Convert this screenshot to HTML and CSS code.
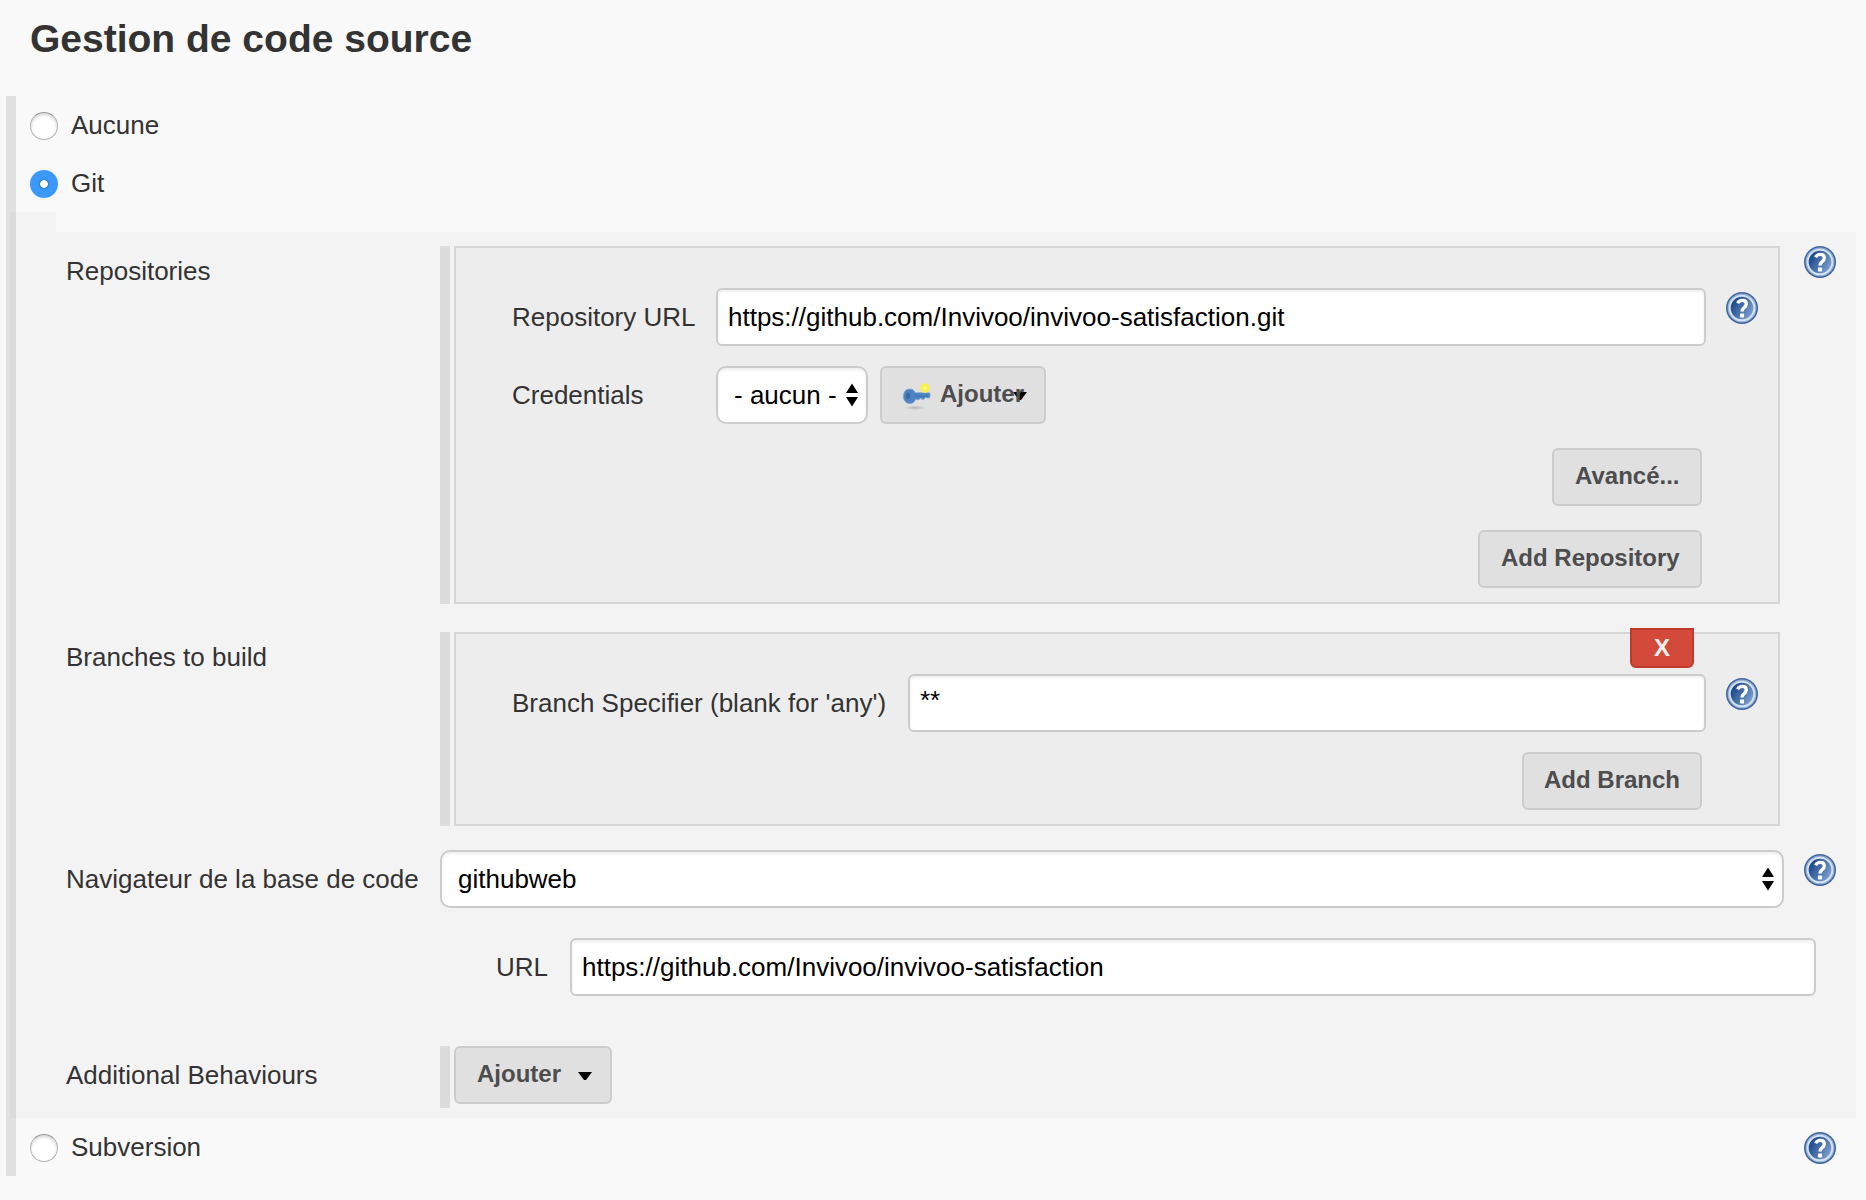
FILE: index.html
```html
<!DOCTYPE html>
<html lang="fr">
<head>
<meta charset="utf-8">
<title>Gestion de code source</title>
<link rel="stylesheet" href="styles.css">
</head>
<body>
<svg class="defs" width="0" height="0" aria-hidden="true">
  <defs>
    <linearGradient id="disc" x1="0" y1="0.2" x2="1" y2="0.8">
      <stop offset="0.15" stop-color="#204c8e"/>
      <stop offset="1" stop-color="#86a8d4"/>
    </linearGradient>
    <linearGradient id="rim" x1="0" y1="0" x2="0" y2="1">
      <stop offset="0" stop-color="#4169a4"/>
      <stop offset="1" stop-color="#3a619c"/>
    </linearGradient>
    <radialGradient id="spark">
      <stop offset="0" stop-color="#fffbb0"/>
      <stop offset="0.45" stop-color="#fbf04e"/>
      <stop offset="0.75" stop-color="#f6ec5c"/>
      <stop offset="1" stop-color="#f6ec5c" stop-opacity="0"/>
    </radialGradient>
    <radialGradient id="shade">
      <stop offset="0" stop-color="#999" stop-opacity="0.6"/>
      <stop offset="1" stop-color="#999" stop-opacity="0"/>
    </radialGradient>
    <symbol id="help" viewBox="0 0 32 32">
      <circle cx="16" cy="16" r="16" fill="url(#rim)"/>
      <circle cx="16" cy="16" r="13.700" fill="none" stroke="#8fabd2" stroke-width="1.600"/>
      <circle cx="16" cy="16" r="12.300" fill="url(#disc)" stroke="#d6e1f0" stroke-width="2"/>
      <path d="M11.600 11.200C12.800 9 14.300 8.300 16.200 8.300C18.900 8.300 20.300 9.700 20.300 11.800C20.300 13.700 19.400 14.700 18.100 15.700C16.800 16.700 16 17.300 16 19.600" fill="none" stroke="#fff" stroke-width="3.300"/>
      <rect x="14" y="21.500" width="4.100" height="3.900" rx="0.600" fill="#fff"/>
    </symbol>
    <symbol id="key" viewBox="0 0 32 32">
      <ellipse cx="14" cy="28.500" rx="12" ry="2.400" fill="url(#shade)"/>
      <path d="M8 8.500C11.500 8.500 13 10 14 12.500H28C29.800 12.500 30.100 13.500 29.900 15L29.500 18H26L25 17L23.500 19.500H21L20 18L18 20L14.500 19.500C13.500 22.500 11.500 24 8.500 24C4 24 1.500 20.500 1.500 16.300C1.500 11.800 4 8.500 8 8.500Z" fill="#4d83c3" stroke="#7ba2d0" stroke-width="0.800"/>
      <path d="M14 16.200H28" stroke="#3f75b5" stroke-width="1.200"/>
      <ellipse cx="6.500" cy="16" rx="2.300" ry="3.500" fill="#3c6ca8"/>
      <circle cx="24.500" cy="7.500" r="6" fill="url(#spark)"/>
    </symbol>
    <symbol id="updown" viewBox="0 0 12 24">
      <path d="M6 0.500L12 10H0ZM6 23.500L0 14H12Z"/>
    </symbol>
    <symbol id="caret" viewBox="0 0 14 8">
      <path d="M0 0H14L8 8H6Z"/>
    </symbol>
  </defs>
</svg>

<h1 class="title">Gestion de code source</h1>

<main class="scm">
  <div class="choice choice-first"><span class="radio"></span><span class="choice-name">Aucune</span></div>
  <div class="choice choice-git"><span class="radio radio-on"></span><span class="choice-name">Git</span></div>

  <section class="panel">
    <div class="panel-notch"></div>
    <div class="panel-body">
      <div class="row row-repos">
        <div class="label label-top">Repositories</div>
        <div class="group">
          <div class="box">
            <div class="line">
              <span class="box-label">Repository URL</span>
              <div class="input">https://github.com/Invivoo/invivoo-satisfaction.git</div>
              <svg class="help"><use href="#help"/></svg>
            </div>
            <div class="line line-next">
              <span class="box-label">Credentials</span>
              <div class="select select-small">- aucun -<svg class="updown"><use href="#updown"/></svg></div>
              <div class="button button-key">
                <svg class="key"><use href="#key"/></svg>
                <svg class="caret caret-under"><use href="#caret"/></svg>
                <span class="button-text">Ajouter</span>
              </div>
            </div>
            <div class="actions">
              <div class="button w-advanced"><span class="button-text">Avancé...</span></div>
              <div class="button w-repository"><span class="button-text">Add Repository</span></div>
            </div>
          </div>
        </div>
        <svg class="help help-flush"><use href="#help"/></svg>
      </div>

      <div class="row row-branches">
        <div class="label label-top">Branches to build</div>
        <div class="group">
          <div class="box">
            <div class="delete">X</div>
            <div class="line">
              <span class="box-label box-label-wide">Branch Specifier (blank for 'any')</span>
              <div class="input input-stars">**</div>
              <svg class="help"><use href="#help"/></svg>
            </div>
            <div class="actions actions-close">
              <div class="button w-branch"><span class="button-text">Add Branch</span></div>
            </div>
          </div>
        </div>
      </div>

      <div class="row row-browser">
        <div class="label">Navigateur de la base de code</div>
        <div class="select select-wide">githubweb<svg class="updown"><use href="#updown"/></svg></div>
        <svg class="help"><use href="#help"/></svg>
      </div>

      <div class="row row-url">
        <div class="label label-url">URL</div>
        <div class="input input-url">https://github.com/Invivoo/invivoo-satisfaction</div>
      </div>

      <div class="row row-extra">
        <div class="label">Additional Behaviours</div>
        <div class="group group-short">
          <div class="button w-add"><span class="button-text">Ajouter</span><svg class="caret"><use href="#caret"/></svg></div>
        </div>
      </div>
    </div>
  </section>

  <div class="choice choice-last">
    <span class="radio"></span><span class="choice-name">Subversion</span>
    <svg class="help help-end"><use href="#help"/></svg>
  </div>
</main>
</body>
</html>
```
FILE: styles.css
```css
* { box-sizing: border-box; }

body {
  margin: 0;
  height: 1200px;
  background: #f9f9f9;
  color: #333;
  font: 26px/30px "Liberation Sans", Arial, sans-serif;
  overflow: hidden;
}

svg { display: block; flex: none; }
.defs { position: absolute; }

.title {
  margin: 0;
  height: 96px;
  padding: 17px 0 0 30px;
  font-size: 39px;
  line-height: 44px;
  font-weight: bold;
}

/* The vertical rule beside the list of options */
.scm {
  margin-left: 6px;
  height: 1080px;
  border-left: 10px solid #e1e1e1;
}

.choice {
  display: flex;
  align-items: center;
  height: 58px;
  padding-left: 14px;
}
.choice-first,
.choice-git { padding-top: 2px; }
.choice-name { margin: -2px 0 0 13px; }
.choice-last { height: 60px; padding-right: 30px; }

.radio {
  width: 28px;
  height: 28px;
  border-radius: 50%;
  background: #fff;
  border: 1.5px solid #b2b2b2;
  border-top-color: #999;
  box-shadow: inset 0 2px 3px rgba(0, 0, 0, .16);
}
.radio-on {
  border: 0;
  background: radial-gradient(circle, #fff 3.500px, #2f83dc 4.300px, #3b99fc 6.500px);
  box-shadow: none;
}

.panel {
  margin-left: -6px;
  width: 1846px;
  height: 906px;
  display: flex;
  flex-direction: column;
}
.panel-notch { width: 46px; height: 20px; background: rgba(0, 0, 0, .024); }
.panel-body {
  flex: 1;
  padding: 14px 20px 0 56px;
  background: rgba(0, 0, 0, .024);
}

.row { display: flex; align-items: flex-start; }
.label { width: 374px; padding-top: 14px; white-space: nowrap; flex: none; }
.label-top { padding-top: 10px; }

.row-repos { height: 358px; margin-bottom: 28px; }
.row-branches { height: 194px; margin-bottom: 24px; }
.row-browser { height: 58px; margin-bottom: 30px; }
.row-url { height: 58px; margin-bottom: 50px; }

.group {
  display: flex;
  width: 1340px;
  height: 100%;
  padding-left: 4px;
  border-left: 10px solid #dbdbdb;
}
.group-short { height: 62px; }

.box {
  position: relative;
  flex: 1;
  padding: 40px 20px 0 56px;
  border: 2px solid #d5d5d5;
  background: #ededed;
}

.line { display: flex; height: 58px; }
.line-next { margin-top: 20px; }
.box-label { width: 204px; padding-top: 14px; flex: none; white-space: nowrap; }
.box-label-wide { width: 396px; }

.input,
.select {
  height: 58px;
  border: 2px solid #ccc;
  border-radius: 6px;
  background: #fff;
  box-shadow: inset 0 2px 3px rgba(0, 0, 0, .07);
  color: #000;
  line-height: 30px;
  padding: 12px 10px;
  white-space: nowrap;
}
.input { flex: 1; }
.input-stars { padding-top: 9px; }

.select {
  display: flex;
  justify-content: space-between;
  border-radius: 10px;
  padding: 12px 8px 12px 16px;
}
.select-small { width: 152px; margin-right: 12px; }
.select-wide { width: 1344px; }
.updown { width: 12px; height: 24px; margin-top: 3px; }

.label-url { width: 504px; padding-left: 430px; }
.input-url { flex: none; width: 1246px; }

.button {
  position: relative;
  display: flex;
  height: 58px;
  border: 2px solid #ccc;
  border-radius: 6px;
  background: #e0e0e0;
  padding: 12px 0 0 21px;
  color: #4d4d4d;
  font-size: 24px;
  line-height: 28px;
  font-weight: bold;
  white-space: nowrap;
}
.button-text { position: relative; }
.w-advanced { width: 150px; }
.w-repository { width: 224px; }
.w-branch { width: 180px; padding-left: 20px; }
.w-add { width: 158px; }
.button-key { width: 166px; padding-left: 20px; }
.key { width: 30px; height: 32px; margin-right: 8px; }

.caret { width: 14px; height: 8px; margin: 12px 0 0 17px; }
.caret-under { position: absolute; left: 131px; top: 24px; margin: 0; }

.actions {
  display: flex;
  flex-direction: column;
  align-items: flex-end;
  gap: 24px;
  margin-top: 24px;
  padding-right: 56px;
}
.actions-close { margin-top: 20px; }

/* Delete tab, hung over the top edge of its box */
.delete {
  position: absolute;
  top: -6px;
  right: 84px;
  width: 64px;
  height: 40px;
  border: 2px solid #c1392b;
  border-radius: 0 0 6px 6px;
  background: #d34a3a;
  color: #f0f0f0;
  font-size: 24px;
  line-height: 35px;
  font-weight: bold;
  text-align: center;
}

.help { width: 32px; height: 32px; margin: 4px 0 0 20px; }
.help-flush { margin: 0 0 0 24px; }
.help-end { margin: 0 0 0 auto; }
```
